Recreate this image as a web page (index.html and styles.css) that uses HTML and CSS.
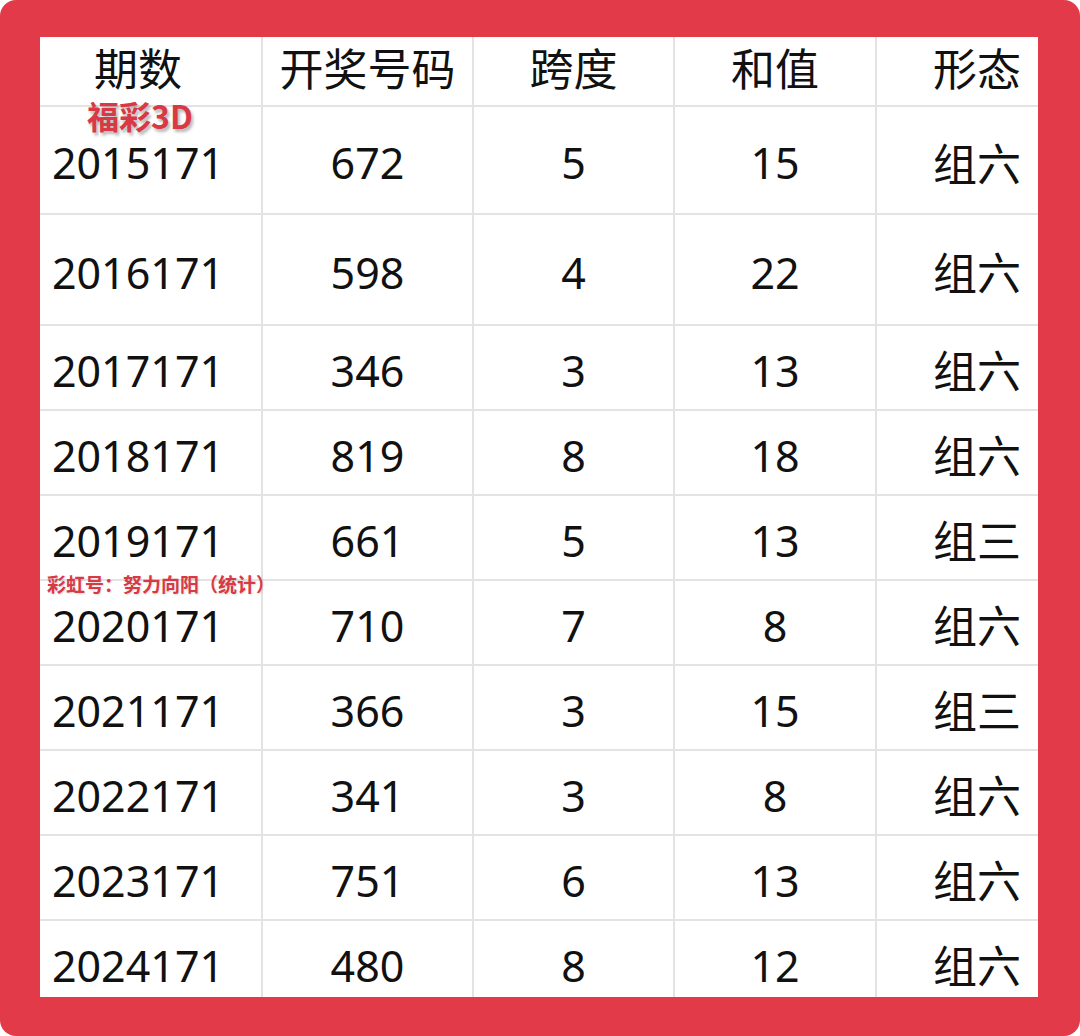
FILE: index.html
```html
<!DOCTYPE html>
<html lang="zh-CN">
<head>
<meta charset="utf-8">
<title>福彩3D 171期 历史同期</title>
<link rel="stylesheet" href="styles.css">
</head>
<body>
<div class="frame">
  <div class="sheet">
    <div class="grid">
      <div class="cell head">期数</div>
      <div class="cell head">开奖号码</div>
      <div class="cell head">跨度</div>
      <div class="cell head">和值</div>
      <div class="cell head">形态</div>

      <div class="cell">2015171</div><div class="cell">672</div><div class="cell">5</div><div class="cell">15</div><div class="cell cn">组六</div>
      <div class="cell">2016171</div><div class="cell">598</div><div class="cell">4</div><div class="cell">22</div><div class="cell cn">组六</div>
      <div class="cell">2017171</div><div class="cell">346</div><div class="cell">3</div><div class="cell">13</div><div class="cell cn">组六</div>
      <div class="cell">2018171</div><div class="cell">819</div><div class="cell">8</div><div class="cell">18</div><div class="cell cn">组六</div>
      <div class="cell">2019171</div><div class="cell">661</div><div class="cell">5</div><div class="cell">13</div><div class="cell cn">组三</div>
      <div class="cell">2020171</div><div class="cell">710</div><div class="cell">7</div><div class="cell">8</div><div class="cell cn">组六</div>
      <div class="cell">2021171</div><div class="cell">366</div><div class="cell">3</div><div class="cell">15</div><div class="cell cn">组三</div>
      <div class="cell">2022171</div><div class="cell">341</div><div class="cell">3</div><div class="cell">8</div><div class="cell cn">组六</div>
      <div class="cell">2023171</div><div class="cell">751</div><div class="cell">6</div><div class="cell">13</div><div class="cell cn">组六</div>
      <div class="cell">2024171</div><div class="cell">480</div><div class="cell">8</div><div class="cell">12</div><div class="cell cn">组六</div>
    </div>
  </div>
  <span class="mark mark-title">福彩3D</span>
  <span class="mark mark-sub">彩虹号：努力向阳（统计）</span>
</div>
</body>
</html>
```
FILE: styles.css
```css
html, body {
  margin: 0;
  padding: 0;
  background: #ffffff;
}

.frame {
  position: relative;
  width: 1080px;
  height: 1036px;
  box-sizing: border-box;
  padding: 37px 42px 39px 40px;
  background: #e23a48;
  border-radius: 16px;
}

.sheet {
  width: 998px;
  height: 960px;
  background: #ffffff;
}

.grid {
  display: grid;
  grid-template-columns: 223px 211px 201px 202px 161px;
  grid-template-rows: 70px 108px 111px repeat(7, 85px) 76px;
  font-family: "Noto Sans", "Noto Sans CJK SC", sans-serif;
  font-size: 43px;
  color: #111111;
}

.cell {
  box-sizing: border-box;
  display: flex;
  align-items: center;
  justify-content: center;
  border-right: 2px solid #e3e3e3;
  border-bottom: 2px solid #e3e3e3;
  padding-top: 6px;
  line-height: 1.2;
}

/* first column is centred a little to the left */
.cell:nth-child(5n+1) {
  padding-right: 25px;
}

/* last column runs past the sheet edge in the original, so its text sits right of centre */
.cell:nth-child(5n) {
  border-right: none;
  padding-left: 39px;
}

.cn {
  font-family: "Noto Sans CJK SC", sans-serif;
  font-size: 44px;
  padding-top: 4px;
}

.head {
  padding-top: 0;
  padding-bottom: 8px;
  font-family: "Noto Sans CJK SC", sans-serif;
  font-size: 44px;
}

/* last row is cut by the sheet bottom */
.cell:nth-last-child(-n+5) {
  border-bottom: none;
  padding-top: 13px;
}

.cell.cn:nth-last-child(-n+5) {
  padding-top: 11px;
}

.mark {
  position: absolute;
  font-family: "Noto Sans CJK SC", sans-serif;
  font-weight: 700;
  color: #d93845;
  white-space: nowrap;
  line-height: 1;
}

.mark-title {
  left: 87px;
  top: 99px;
  font-size: 32px;
  text-shadow: 2px 3px 3px rgba(0, 0, 0, 0.28);
}

.mark-sub {
  left: 47px;
  top: 574px;
  font-size: 19px;
  text-shadow: 1px 1px 2px rgba(0, 0, 0, 0.15);
}
```
